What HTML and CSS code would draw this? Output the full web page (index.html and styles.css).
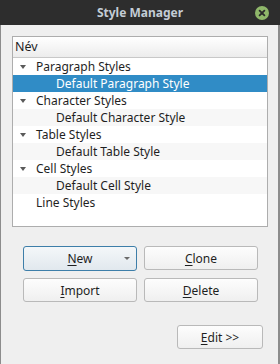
FILE: index.html
```html
<!DOCTYPE html>
<html lang="hu">
<head>
    <meta charset="UTF-8">
    <title>Style Manager</title>
    <link rel="stylesheet" href="styles.css">
</head>
<body>
    <div class="window">
        <div class="titlebar">
            <span class="title">Style Manager</span>
            <span class="close">
                <svg width="14" height="14" viewBox="0 0 14 14">
                    <circle cx="7" cy="7" r="7" fill="#8fb76a"/>
                    <path d="M4.6 4.6 L9.4 9.4 M9.4 4.6 L4.6 9.4" stroke="#2b2b2b" stroke-width="1.8" stroke-linecap="round"/>
                </svg>
            </span>
        </div>
        <div class="content">
            <div class="tree">
                <div class="tree-header">Név</div>
                <div class="row parent"><span class="arrow"></span>Paragraph Styles</div>
                <div class="row child selected">Default Paragraph Style</div>
                <div class="row parent"><span class="arrow"></span>Character Styles</div>
                <div class="row child alt">Default Character Style</div>
                <div class="row parent"><span class="arrow"></span>Table Styles</div>
                <div class="row child alt">Default Table Style</div>
                <div class="row parent"><span class="arrow"></span>Cell Styles</div>
                <div class="row child alt">Default Cell Style</div>
                <div class="row parent leaf">Line Styles</div>
            </div>
            <div class="buttons">
                <button class="btn focused"><u>N</u>ew<span class="drop"></span></button>
                <button class="btn"><u>C</u>lone</button>
                <button class="btn"><u>I</u>mport</button>
                <button class="btn"><u>D</u>elete</button>
            </div>
            <div class="footer">
                <button class="btn edit"><u>E</u>dit &gt;&gt;</button>
            </div>
        </div>
    </div>
</body>
</html>
```

FILE: styles.css
```css
body {
    margin: 0;
    width: 280px;
    height: 364px;
    overflow: hidden;
    font-family: "Noto Sans", "Open Sans", sans-serif;
    font-size: 12px;
    color: #1f1f1f;
}
.window {
    height: 364px;
    background-color: #efefef;
    border-left: 1px solid #8c8c8c;
    border-right: 2px solid #8c8c8c;
    display: flex;
    flex-direction: column;
}
.titlebar {
    height: 25px;
    margin: 0 -2px 0 -1px;
    background-color: #2d2d2d;
    display: flex;
    align-items: center;
    justify-content: center;
    position: relative;
}
.title {
    color: #c3ccd5;
    font-weight: bold;
    font-size: 12px;
}
.close {
    position: absolute;
    right: 11px;
    top: 6px;
    width: 14px;
    height: 14px;
}
.content {
    padding: 11px 10px 0 11px;
}
.tree {
    height: 189px;
    background-color: #fff;
    border: 1px solid #adadad;
}
.tree-header {
    height: 20px;
    line-height: 20px;
    padding-left: 2px;
    background: linear-gradient(#ffffff, #ececec);
    border-bottom: 1px solid #c8c8c8;
    font-size: 12.5px;
}
.row {
    height: 17px;
    line-height: 17px;
    white-space: nowrap;
}
.parent {
    padding-left: 23px;
    position: relative;
}
.child {
    padding-left: 43px;
}
.alt {
    background-color: #f7f7f7;
}
.selected {
    background-color: #308cc6;
    color: #fff;
}
.arrow {
    position: absolute;
    left: 7px;
    top: 7px;
    width: 0;
    height: 0;
    border-left: 3.5px solid transparent;
    border-right: 3.5px solid transparent;
    border-top: 4px solid #5a5a5a;
}
.buttons {
    display: grid;
    grid-template-columns: 114px 114px;
    gap: 7px;
    padding: 19px 0 0 11px;
}
.btn {
    height: 24px;
    border: 1px solid #b9b9b9;
    border-radius: 3px;
    background: linear-gradient(#fdfdfd, #efefef);
    font-family: "Noto Sans", "Open Sans", sans-serif;
    font-size: 12px;
    color: #1f1f1f;
    padding: 0;
    position: relative;
}
.btn u {
    text-decoration-thickness: 1px;
    text-underline-offset: 2px;
}
.focused {
    height: 25px;
    border-color: #3d7ea9;
    background: linear-gradient(#f4f7f9, #e1e8ee);
}
.drop {
    position: absolute;
    right: 6px;
    top: 10px;
    border-left: 3px solid transparent;
    border-right: 3px solid transparent;
    border-top: 3px solid #6a6a6a;
}
.footer {
    display: flex;
    justify-content: flex-end;
    padding: 23px 5px 0 0;
}
.edit {
    width: 86px;
}
```
